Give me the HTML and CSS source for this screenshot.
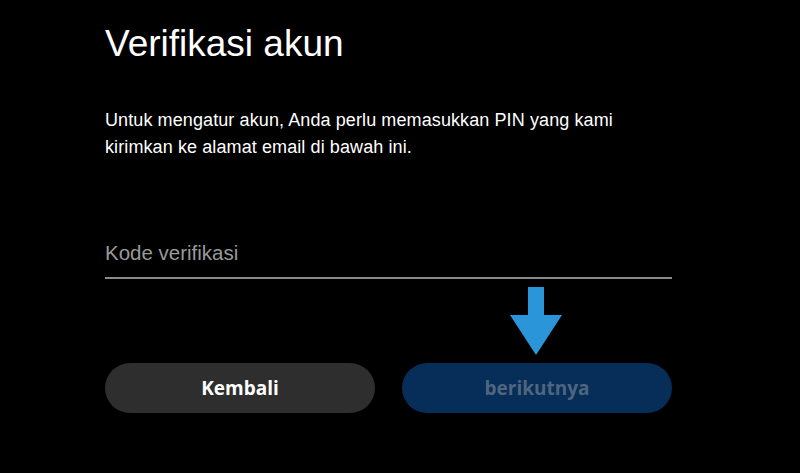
FILE: index.html
```html
<!DOCTYPE html>
<html lang="id">
<head>
<meta charset="UTF-8">
<meta name="viewport" content="width=device-width, initial-scale=1.0">
<title>Verifikasi akun</title>
<link rel="stylesheet" href="styles.css">
</head>
<body>

<div class="panel">
  <h1 class="title">Verifikasi akun</h1>

  <p class="intro">Untuk mengatur akun, Anda perlu memasukkan PIN yang kami kirimkan ke alamat email di bawah ini.</p>

  <input class="code-input" type="text" placeholder="Kode verifikasi">

  <div class="actions">
    <button class="btn btn-back">Kembali</button>
    <button class="btn btn-next">berikutnya</button>

    <!-- pointer arrow drawn over the screenshot -->
    <svg class="hint-arrow" width="52" height="68" viewBox="0 0 52 68">
      <path d="M18 0 H34 V28 H52 L26 68 L0 28 H18 Z" fill="#2b95d9"/>
    </svg>
  </div>
</div>

</body>
</html>
```

FILE: styles.css
```css
body {
  margin: 0;
  background-color: #000;
  color: #fff;
  font-family: "Liberation Sans", Arial, sans-serif;
}
.panel {
  width: 567px;
  margin-left: 105px;
  padding-top: 23px;
  display: flex;
  flex-direction: column;
}
.title {
  margin: 0;
  font-size: 37px;
  line-height: 42px;
  font-weight: normal;
}
.intro {
  margin: 42px 0 0;
  font-size: 18px;
  line-height: 27px;
  letter-spacing: 0.1px;
  width: 545px;
}
.code-input {
  margin-top: 64px;
  height: 54px;
  padding: 4px 0 0;
  box-sizing: border-box;
  background: transparent;
  border: none;
  border-bottom: 2px solid #8a8a8a;
  color: #fff;
  font-family: "Liberation Sans", Arial, sans-serif;
  font-size: 20.5px;
  outline: none;
}
.code-input::placeholder {
  color: #9a9a9a;
}
.actions {
  position: relative;
  margin-top: 84px;
  display: flex;
  gap: 27px;
}
.btn {
  width: 270px;
  height: 50px;
  border: none;
  border-radius: 25px;
  font-family: "Open Sans", sans-serif;
  font-weight: 700;
  font-size: 19px;
  cursor: pointer;
}
.btn-back {
  background-color: #2e2e2e;
  color: #fff;
}
.btn-next {
  background-color: #062e58;
  color: #4f6580;
}
.hint-arrow {
  position: absolute;
  left: 405px;
  top: -76px;
}
```
